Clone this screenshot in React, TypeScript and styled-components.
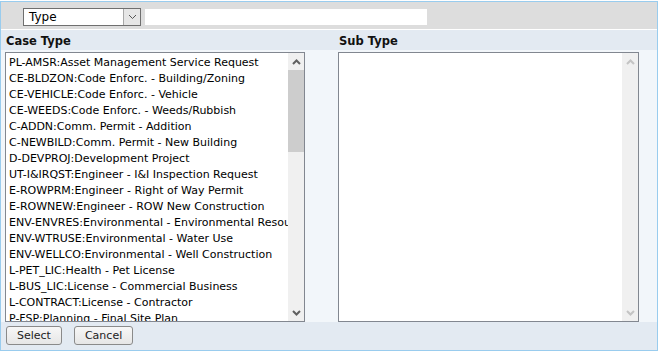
import React from 'react';
import styled, {createGlobalStyle} from 'styled-components';

const caseTypes = [
    'PL-AMSR:Asset Management Service Request',
    'CE-BLDZON:Code Enforc. - Building/Zoning',
    'CE-VEHICLE:Code Enforc. - Vehicle',
    'CE-WEEDS:Code Enforc. - Weeds/Rubbish',
    'C-ADDN:Comm. Permit - Addition',
    'C-NEWBILD:Comm. Permit - New Building',
    'D-DEVPROJ:Development Project',
    'UT-I&IRQST:Engineer - I&I Inspection Request',
    'E-ROWPRM:Engineer - Right of Way Permit',
    'E-ROWNEW:Engineer - ROW New Construction',
    'ENV-ENVRES:Environmental - Environmental Resources',
    'ENV-WTRUSE:Environmental - Water Use',
    'ENV-WELLCO:Environmental - Well Construction',
    'L-PET_LIC:Health - Pet License',
    'L-BUS_LIC:License - Commercial Business',
    'L-CONTRACT:License - Contractor',
    'P-FSP:Planning - Final Site Plan',
    'P-PSP:Planning - Preliminary Site Plan',
    'P-REZONE:Planning - Rezoning',
]

const Chevron = ({up, color, thin}: {up?: boolean, color: string, thin?: boolean}) => (
    <svg width="9" height="6" viewBox="0 0 9 6">
        <polyline
            points={up ? '1,5 4.5,1.5 8,5' : '1,1 4.5,4.5 8,1'}
            fill="none"
            stroke={color}
            strokeWidth={thin ? 1 : 2}
        />
    </svg>
)

const App = () => {
    return (
        <>
            <GlobalStyle/>
            <Frame>
                <Toolbar>
                    <Dropdown>
                        <DropdownValue>Type</DropdownValue>
                        <DropdownButton><Chevron color="#555" thin/></DropdownButton>
                    </Dropdown>
                    <SearchInput/>
                </Toolbar>
                <HeaderRow>
                    <Heading>Case Type</Heading>
                    <Heading>Sub Type</Heading>
                </HeaderRow>
                <Lists>
                    <ListBox>
                        <Items>
                            {caseTypes.map(t => <Item key={t}>{t}</Item>)}
                        </Items>
                        <ScrollBar>
                            <ScrollArrow><Chevron up color="#606060"/></ScrollArrow>
                            <ScrollTrack>
                                <Thumb $height={82}/>
                            </ScrollTrack>
                            <ScrollArrow><Chevron color="#606060"/></ScrollArrow>
                        </ScrollBar>
                    </ListBox>
                    <ListBox>
                        <Items/>
                        <ScrollBar>
                            <ScrollArrow><Chevron up color="#c4c4c4"/></ScrollArrow>
                            <ScrollTrack/>
                            <ScrollArrow><Chevron color="#c4c4c4"/></ScrollArrow>
                        </ScrollBar>
                    </ListBox>
                </Lists>
                <Footer>
                    <Button>Select</Button>
                    <Button>Cancel</Button>
                </Footer>
            </Frame>
        </>
    );
};

export default App;


const GlobalStyle = createGlobalStyle`
  body {
    margin: 0;
    background: #ffffff;
    font-family: "DejaVu Sans", Verdana, sans-serif;
    font-size: 11px;
    color: #000;
  }
`
const Frame = styled.div`
  margin-top: 1px;
  width: 656px;
  height: 348px;
  border: 1px solid #99ccee;
  display: flex;
  flex-direction: column;
`
const Toolbar = styled.div`
  height: 27px;
  background: #dddddd;
  border-bottom: 1px solid #ffffff;
  display: flex;
  align-items: flex-start;
  padding-left: 22px;
  gap: 4px;
`
const Dropdown = styled.div`
  margin-top: 6px;
  width: 116px;
  height: 16px;
  border: 1px solid #6f6f6f;
  background: #ffffff;
  display: flex;
`
const DropdownValue = styled.div`
  flex: 1;
  padding-left: 5px;
  line-height: 17px;
  font-size: 12px;
`
const DropdownButton = styled.div`
  width: 16px;
  background: #e6e6e6;
  border-left: 1px solid #a8a8a8;
  display: flex;
  align-items: center;
  justify-content: center;
`
const SearchInput = styled.div`
  margin-top: 7px;
  width: 282px;
  height: 16px;
  background: #ffffff;
`
const HeaderRow = styled.div`
  height: 20px;
  background: #e3eaf2;
  display: grid;
  grid-template-columns: 333px 1fr;
  align-items: center;
  padding: 1px 0 0 5px;
  box-sizing: border-box;
`
const Heading = styled.div`
  font-weight: bold;
  font-size: 11.5px;
  color: #111;
`
const Lists = styled.div`
  height: 270px;
  padding: 2px 0 0 4px;
  background: #f2f6fa;
  display: grid;
  grid-template-columns: 300px 301px;
  column-gap: 33px;
`
const ListBox = styled.div`
  border: 1px solid #828790;
  background: #ffffff;
  display: flex;
  overflow: hidden;
  height: 268px;
`
const Items = styled.div`
  flex: 1;
  min-width: 0;
  overflow: hidden;
  padding-top: 2px;
`
const Item = styled.div`
  height: 16px;
  line-height: 16px;
  padding-left: 3px;
  white-space: nowrap;
  overflow: hidden;
`
const ScrollBar = styled.div`
  width: 16px;
  background: #f0f0f0;
  display: flex;
  flex-direction: column;
`
const ScrollArrow = styled.div`
  height: 17px;
  display: flex;
  align-items: center;
  justify-content: center;
`
const ScrollTrack = styled.div`
  flex: 1;
`
const Thumb = styled.div<{$height: number}>`
  height: ${props => props.$height}px;
  background: #cdcdcd;
`
const Footer = styled.div`
  flex: 1;
  background: #e3eaf2;
  display: flex;
  align-items: flex-start;
  padding: 4px 0 0 5px;
  gap: 12px;
`
const Button = styled.button`
  height: 19px;
  padding: 0 10px;
  border: 1px solid #8a8a8a;
  border-radius: 3px;
  background: linear-gradient(#f7f7f7, #e6e6e6);
  font-family: "DejaVu Sans", Verdana, sans-serif;
  font-size: 11px;
  color: #222;
  line-height: 17px;
`
